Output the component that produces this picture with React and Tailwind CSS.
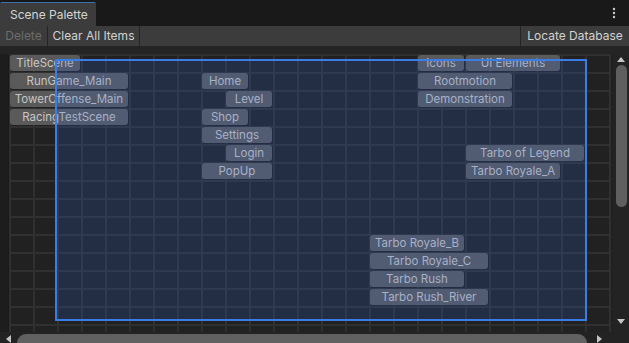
import React from 'react';

const ITEMS = [
  { label: 'TitleScene', cls: 'col-start-1 col-span-3 row-start-1' },
  { label: 'RunGame_Main', cls: 'col-start-1 col-span-5 row-start-2' },
  { label: 'TowerOffense_Main', cls: 'col-start-1 col-span-5 row-start-3' },
  { label: 'RacingTestScene', cls: 'col-start-1 col-span-5 row-start-4' },
  { label: 'Home', cls: 'col-start-9 col-span-2 row-start-2' },
  { label: 'Level', cls: 'col-start-10 col-span-2 row-start-3' },
  { label: 'Shop', cls: 'col-start-9 col-span-2 row-start-4' },
  { label: 'Settings', cls: 'col-start-9 col-span-3 row-start-5' },
  { label: 'Login', cls: 'col-start-10 col-span-2 row-start-6' },
  { label: 'PopUp', cls: 'col-start-9 col-span-3 row-start-7' },
  { label: 'Icons', cls: 'col-start-18 col-span-2 row-start-1' },
  { label: 'UI Elements', cls: 'col-start-20 col-span-4 row-start-1' },
  { label: 'Rootmotion', cls: 'col-start-18 col-span-4 row-start-2' },
  { label: 'Demonstration', cls: 'col-start-18 col-span-4 row-start-3' },
  { label: 'Tarbo of Legend', cls: 'col-start-20 col-span-5 row-start-6' },
  { label: 'Tarbo Royale_A', cls: 'col-start-20 col-span-4 row-start-7' },
  { label: 'Tarbo Royale_B', cls: 'col-start-16 col-span-4 row-start-11' },
  { label: 'Tarbo Royale_C', cls: 'col-start-16 col-span-5 row-start-12' },
  { label: 'Tarbo Rush', cls: 'col-start-16 col-span-4 row-start-13' },
  { label: 'Tarbo Rush_River', cls: 'col-start-16 col-span-5 row-start-14' },
];

export default function App() {
  return (
    <div className="w-[629px] h-[343px] overflow-hidden bg-[#1e1e1e] font-['Inter','Noto_Sans',sans-serif] text-[12px] select-none">
      {/* Tab bar */}
      <div className="h-[26px] bg-[#191919] flex items-end justify-between">
        <div className="h-[24px] w-[96px] bg-[#3c3c3c] border-t border-[#3d6fb0] rounded-t-[2px] flex items-center pl-[10px] text-[#d4d4d4]">
          Scene Palette
        </div>
        <div className="h-[26px] w-[16px] flex items-center justify-center mr-[7px]">
          <svg width="4" height="12" viewBox="0 0 4 12">
            <circle cx="2" cy="2" r="1.2" fill="#c8c8c8" />
            <circle cx="2" cy="6" r="1.2" fill="#c8c8c8" />
            <circle cx="2" cy="10" r="1.2" fill="#c8c8c8" />
          </svg>
        </div>
      </div>

      {/* Toolbar */}
      <div className="h-[20px] bg-[#3c3c3c] flex items-center">
        <div className="h-full w-[48px] border-r border-[#252525] flex items-center justify-center text-[#6d6d6d]">
          Delete
        </div>
        <div className="h-full w-[92px] border-r border-[#252525] flex items-center justify-center text-[#d2d2d2]">
          Clear All Items
        </div>
        <div className="flex-1" />
        <div className="h-full w-[109px] border-l border-[#252525] flex items-center justify-center text-[#d2d2d2]">
          Locate Database
        </div>
      </div>

      <div className="h-[8px] bg-[#242424]" />

      {/* Canvas + vertical scrollbar */}
      <div className="h-[278px] flex">
        <div className="w-[9px] bg-[#1d1d1d] border-r border-[#191919]" />
        <div className="relative w-[604px] bg-[#212121] overflow-hidden">
          <div className="grid grid-cols-[repeat(25,24px)] grid-rows-[repeat(15,18px)] w-[602px] h-[278px] [background-image:linear-gradient(90deg,#303030_2px,transparent_2px),linear-gradient(180deg,#303030_2px,transparent_2px)] [background-size:24px_18px]">
            {ITEMS.map(item => (
              <div
                key={item.label}
                className={`${item.cls} m-px rounded-[3px] bg-[#5a5a5a] flex items-center justify-center text-[11.5px] text-[#c6c6c6] leading-none whitespace-nowrap pt-px`}
              >
                {item.label}
              </div>
            ))}
          </div>

          {/* Selection rectangle */}
          <div className="absolute left-[46px] top-[5px] w-[532px] h-[262px] border-2 border-[#3a7de6] bg-[#2c5fd0]/20 pointer-events-none" />
        </div>

        <div className="flex-1 bg-[#232323] flex flex-col items-center py-[2px]">
          <svg width="8" height="6" viewBox="0 0 8 6" className="mt-[1px]">
            <path d="M4 0 L8 5 L0 5 Z" fill="#c4c4c4" />
          </svg>
          <div className="mt-[2px] w-[11px] h-[142px] rounded-full bg-[#5f5f5f]" />
          <div className="flex-1" />
          <svg width="8" height="6" viewBox="0 0 8 6" className="mb-[5px]">
            <path d="M0 0 L8 0 L4 5 Z" fill="#c4c4c4" />
          </svg>
        </div>
      </div>

      {/* Horizontal scrollbar */}
      <div className="h-[11px] bg-[#232323] flex items-end">
        <div className="w-[17px] h-full flex items-center justify-center pt-[3px]">
          <svg width="6" height="8" viewBox="0 0 6 8">
            <path d="M0 4 L5 0 L5 8 Z" fill="#c4c4c4" />
          </svg>
        </div>
        <div className="w-[570px] h-[9px] rounded-t-full rounded-b-none bg-[#616161]" />
        <div className="w-[26px] h-full flex items-center justify-center pt-[3px]">
          <svg width="6" height="8" viewBox="0 0 6 8">
            <path d="M0 0 L5 4 L0 8 Z" fill="#c4c4c4" />
          </svg>
        </div>
      </div>
    </div>
  );
}
